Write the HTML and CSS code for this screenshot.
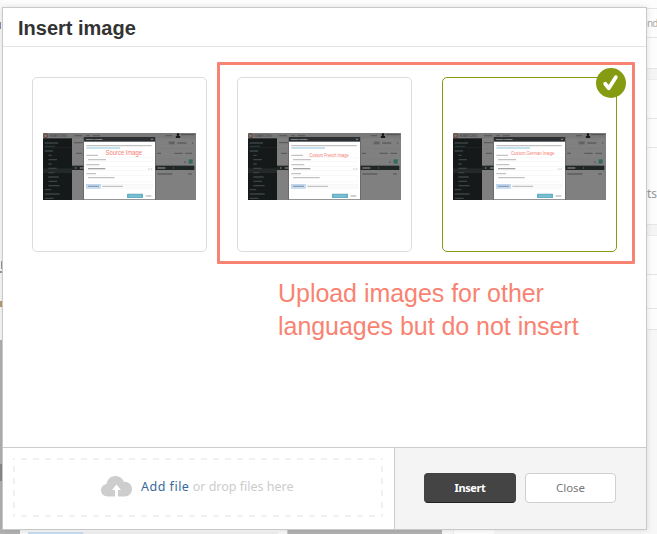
FILE: index.html
```html
<!DOCTYPE html>
<html lang="en">
<head>
<meta charset="utf-8">
<title>Insert image</title>
<link rel="stylesheet" href="styles.css">
</head>
<body>
<svg class="defs" aria-hidden="true">
  <symbol id="shot" viewBox="0 0 459 201">
    <rect width="459" height="201" fill="#808080"/>
    <rect width="459" height="16" fill="#797979"/>
    <rect y="16" width="87" height="185" fill="#151919"/>
    <rect y="106" width="87" height="14" fill="#242828"/>
    <rect x="0" y="42" width="87" height="1" fill="#303535"/>
    <rect x="87" y="98" width="367" height="13" fill="#202526"/>
    <rect x="92" y="45" width="362" height="1" fill="#747474"/>
    <circle cx="8" cy="8" r="6" fill="none" stroke="#6a3d36" stroke-width="3"/>
    <circle cx="405" cy="5" r="4" fill="#151515"/>
    <rect x="398" y="9" width="14" height="6" rx="3" fill="#151515"/>
    <rect x="376" y="24" width="20" height="11" fill="#707070"/>
    <rect x="340" y="78" width="94" height="16" fill="none" stroke="#777"/>
    <rect x="437" y="79" width="12" height="13" fill="#346b5f"/>
    <!-- page labels -->
    <path stroke="#5c5c5c" stroke-width="4" fill="none" d="M94 8h23M130 8h10M149 8h22M368 8h19M93 29h27M379 30h14M403 30h27M447 30h4M99 61h18M342 61h12M394 61h25M427 61h20M423 87h5M343 123h45M436 123h10"/>
    <path stroke="#505050" stroke-width="3" d="M414 5h41"/>
    <path stroke="#777" stroke-width="4" d="M96 105h4M111 105h14M343 105h24M390 105h2"/>
    <!-- sidebar labels -->
    <path stroke="#3d4343" stroke-width="4" fill="none" d="M5 30h40M5 54h25M16 67h10M16 80h26M16 93h10M16 106h25M16 119h18M16 132h31M16 145h26M16 158h34M5 170h20M5 183h45M5 196h27"/>
    <path stroke="#244240" stroke-width="3" d="M5 40h31"/>
    <!-- dialog -->
    <rect x="121" y="12" width="217" height="189" fill="#626262"/>
    <rect x="123" y="13" width="213" height="186" fill="#fff"/>
    <rect x="123" y="12" width="213" height="14" fill="#2c3032"/>
    <path stroke="#ddd" stroke-width="1.500" d="M325 17l4 4m0-4l-4 4"/>
    <g fill="#fff" stroke="#eee"><rect x="130" y="73" width="199" height="12"/><rect x="130" y="101" width="199" height="11"/><rect x="130" y="128" width="199" height="19"/><rect x="130" y="154" width="199" height="12" fill="#fafafa"/></g>
    <rect x="130" y="154" width="43" height="12" fill="#c5dcf5" stroke="#9bbfe5"/>
    <path stroke="#c2c2c2" stroke-width="4" fill="none" d="M130 38h196M130 67h35M135 80h54M130 95h39M316 108h3M323 108h3M130 122h29M135 134h80M178 160h62M308 189h17"/>
    <path stroke="#a4a4a4" stroke-width="4" d="M135 107h52"/>
    <path stroke="#b3d8e8" stroke-width="4" d="M130 45h101"/>
    <path stroke="#8f9fb2" stroke-width="4" d="M135 160h33"/>
    <rect x="252" y="182" width="48" height="13" rx="1" fill="#64b0c7"/>
    <path stroke="#8ccadd" stroke-width="3.500" d="M257 189h38"/>
  </symbol>
</svg>

<div class="backdrop">
  <div class="edge-left">
    <div class="edge-top"></div>
    <div class="edge-shade"></div>
  </div>
  <div class="edge-bottom">
    <div class="under-panel"><div class="under-file"></div></div>
    <div class="under-gap"></div>
    <div class="under-column"></div>
  </div>
  <div class="edge-right">
    <div class="row r1"></div>
    <div class="row r2">nd</div>
    <div class="row r3"></div>
    <div class="band"></div>
    <div class="row r4"></div>
    <div class="row r5"></div>
    <div class="row r6">ts</div>
    <div class="band"></div>
    <div class="row r7"></div>
    <div class="row r8"></div>
    <div class="row r9"></div>
  </div>
</div>

<div class="modal">
  <header class="modal-header"><h1>Insert image</h1></header>
  <main class="modal-body">
    <div class="cards">
      <div class="card">
        <svg class="thumb" viewBox="0 0 459 201"><use class="soft" href="#shot"/><text class="brand" x="18" y="13" textLength="54">SMARTLING</text><text class="bar-title" x="129" y="22" textLength="50">Import Glossary</text><text class="stamp" x="188" y="67" font-size="19" textLength="109" lengthAdjust="spacingAndGlyphs">Source Image</text></svg>
      </div>
      <div class="card">
        <svg class="thumb" viewBox="0 0 459 201"><use class="soft" href="#shot"/><text class="brand" x="18" y="13" textLength="54">SMARTLING</text><text class="bar-title" x="129" y="22" textLength="50">Import Glossary</text><text class="stamp" x="184" y="71" font-size="14.500" textLength="118" lengthAdjust="spacingAndGlyphs">Custom French Image</text></svg>
      </div>
      <div class="card selected">
        <svg class="thumb" viewBox="0 0 459 201"><use class="soft" href="#shot"/><text class="brand" x="18" y="13" textLength="54">SMARTLING</text><text class="bar-title" x="129" y="22" textLength="50">Import Glossary</text><text class="stamp" x="174" y="67" font-size="15" textLength="130" lengthAdjust="spacingAndGlyphs">Custom German Image</text></svg>
        <svg class="badge" viewBox="0 0 30 30"><circle cx="15" cy="15" r="15" fill="#859c12"/><path d="M9.200 15.800 12.800 20.200 19.800 9.200" fill="none" stroke="#fff" stroke-width="3.800" stroke-linecap="round" stroke-linejoin="round"/></svg>
      </div>
    </div>
    <p class="note">Upload images for other<br>languages but do not insert</p>
    <div class="highlight"></div>
  </main>
  <footer class="modal-footer">
    <div class="upload">
      <svg class="dash" viewBox="0 0 370 59"><path d="M0 1H370M0 58H370" stroke-dasharray="6 6" stroke-dashoffset="4"/><path d="M1 0V59M369 0V59" stroke-dasharray="6 6" stroke-dashoffset="4"/></svg>
      <svg class="cloud" viewBox="0 0 31 21"><path fill="#cdcdcd" d="M7 20.500C3 20.500 0 17.800 0 14.300 0 11 2.500 8.400 5.600 8 6.200 3.300 9.700 0 14.500 0 18.400 0 21.500 2.300 22.800 5.700 27.500 5.300 31 8.700 31 13 31 17.200 27.900 20.500 23.800 20.500H17V14H20L15.500 8.500 11 14H14V20.500Z"/></svg>
      <span class="upload-text"><a>Add file</a> or drop files here</span>
    </div>
    <div class="actions">
      <button class="btn primary">Insert</button>
      <button class="btn">Close</button>
    </div>
  </footer>
</div>
</body>
</html>
```
FILE: styles.css
```css
* { box-sizing: border-box; }
body { margin: 0; width: 657px; height: 534px; overflow: hidden; position: relative; background: #fdfdfd; font-family: "Noto Sans", sans-serif; }
.defs { position: absolute; width: 0; height: 0; }

.backdrop { height: 534px; display: grid; grid-template-columns: 3px 1fr 11px; grid-template-rows: 529px 5px; }
.edge-left { grid-row: 1 / 3; display: flex; flex-direction: column; }
.edge-top { height: 340px; background: linear-gradient(#8390b5, #8390b5) 0 22px / 1px 7px no-repeat, linear-gradient(#999, #999) 0 271px / 3px 2px no-repeat, linear-gradient(#999, #999) 1px 261px / 1px 8px no-repeat, linear-gradient(#bd9b72, #bd9b72) 0 301px / 2px 6px no-repeat, #fafafa; }
.edge-shade { flex: 1; background: linear-gradient(#8a8a8a, #8a8a8a) 0 124px / 3px 17px no-repeat, #b2b2b2; }
.edge-bottom { grid-column: 2; grid-row: 2; display: flex; background: #fafafa; }
.under-panel { width: 268px; padding: 3px 9px 0 8px; margin-left: 17px; background: #f8f8f8; box-shadow: -17px 0 0 #b2b2b2; border-right: 1px solid #ccc; }
.under-file { height: 2px; background: linear-gradient(90deg, #c8dcf2 55px, #eee 55px); }
.under-gap { width: 154px; background: #b2b2b2; }
.under-column { flex: 1; margin-left: 11px; border-left: 1px solid #eee; background: linear-gradient(90deg, #fff 40px, #f7f7f7 40px); }
.edge-right { grid-column: 3; grid-row: 1 / 3; display: flex; flex-direction: column; overflow: hidden; background: #f7f7f7; font-size: 11px; line-height: 16px; color: #aaa; }
.row { border-bottom: 1px solid #e5e5e5; background: #fdfdfd; flex: none; }
.r1 { height: 9px; }
.r2 { height: 29px; padding: 6px 0 0 1px; font-size: 10px; letter-spacing: -1px; white-space: nowrap; color: #aaa; }
.r3 { height: 31px; }
.band { height: 11px; background: #f5f5f5; border-bottom: 1px solid #eee; flex: none; }
.r4 { height: 39px; }
.r5 { height: 29px; }
.r6 { height: 77px; padding: 38px 0 0 1px; font-size: 12px; color: #999; }
.r7 { height: 39px; }
.r8 { height: 34px; }
.r9 { height: 21px; }

.modal { position: absolute; left: 2px; top: 7px; width: 645px; height: 523px; display: flex; flex-direction: column; border: 1px solid #c9c9c9; background: #fff; box-shadow: 0 0 6px rgba(0, 0, 0, .13); }
.modal-header { height: 39px; border-bottom: 1px solid #e5e5e5; padding: 1px 0 0 15px; }
h1 { margin: 0; font: bold 20px/38px "Liberation Sans", sans-serif; color: #333; }
.modal-body { position: relative; height: 400px; padding: 30px 29px 0; }
.cards { display: flex; gap: 30px; }
.card { position: relative; width: 175px; height: 175px; flex: none; border: 1px solid #dcdcdc; border-radius: 5px; display: flex; justify-content: center; padding-top: 55px; }
.selected { border-color: #859c12; }
.thumb { width: 153px; height: 67px; display: block; }
.soft { filter: blur(1px); }
.thumb text { font-family: "Liberation Sans", sans-serif; }
.brand { font-size: 11px; fill: #484848; }
.bar-title { font-size: 7px; font-weight: bold; fill: #c8c8c8; }
.stamp { fill: #f47a70; }
.badge { position: absolute; width: 30px; height: 30px; right: -10px; top: -10px; z-index: 3; }
.highlight { position: absolute; left: 214px; top: 15px; width: 418px; height: 202px; border: 3px solid #f88372; border-radius: 1px; z-index: 2; }
.note { margin: 25px 0 0 246px; font: 25px/33px "Liberation Sans", sans-serif; letter-spacing: -.04px; color: #f88372; white-space: nowrap; }

.modal-footer { flex: 1; display: flex; border-top: 1px solid #ccc; }
.upload { position: relative; width: 391px; display: flex; align-items: center; padding: 0 0 4px 98px; }
.dash { position: absolute; left: 10px; top: 10px; width: 370px; height: 59px; fill: none; stroke: #f0f0f0; stroke-width: 2; }
.cloud { width: 31px; height: 21px; margin-right: 9px; }
.upload-text { font-size: 12.500px; color: #ccc; white-space: nowrap; }
.upload-text a { color: #37699a; letter-spacing: .5px; }
.actions { flex: 1; display: flex; gap: 9px; padding: 25px 0 0 29px; background: #f4f4f4; border-left: 1px solid #ccc; }
.btn { width: 91px; height: 30px; padding: 0; border: 1px solid #d0d0d0; border-radius: 4px; background: #fff; color: #777; font: 11.500px/26px "Noto Sans", sans-serif; }
.primary { width: 92px; border-color: #444 #444 #222; background: #444; color: #fff; font-weight: bold; font-size: 11px; letter-spacing: -.4px; }
```
